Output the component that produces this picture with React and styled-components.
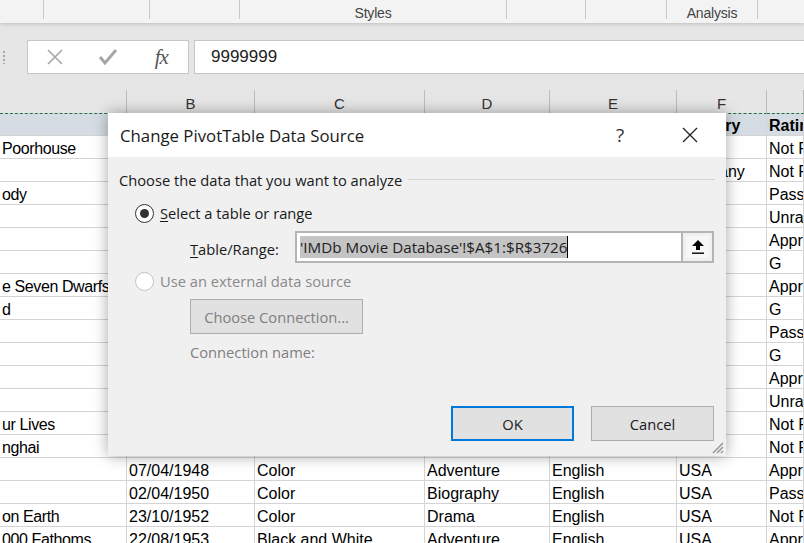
import React from "react"
import styled, { createGlobalStyle } from "styled-components"

const GlobalStyle = createGlobalStyle`
    html, body {
        margin: 0;
        padding: 0;
        width: 804px;
        height: 543px;
        overflow: hidden;
        background: #ffffff;
    }
    * { box-sizing: border-box; }
`

const Page = styled.div`
    position: relative;
    width: 804px;
    height: 543px;
    overflow: hidden;
    font-family: "Liberation Sans", Arial, sans-serif;
    display: flex;
    flex-direction: column;

    & > * { flex-shrink: 0; }
`

const Ribbon = styled.div`
    height: 23px;
    background: #f3f3f3;
    display: flex;
    position: relative;
    z-index: 2;
    box-shadow: 0 1px 4px rgba(0, 0, 0, 0.18);
`

const RibbonGroup = styled.div`
    width: ${p => p.w}px;
    flex: ${p => (p.grow ? 1 : "none")};
    height: 19px;
    border-right: ${p => (p.last ? "none" : "1px solid #c8c8c8")};
    display: flex;
    justify-content: center;
    align-items: center;
    color: #444;
    font-size: 14px;
    padding-top: 7px;
    letter-spacing: -0.2px;
`

const FormulaArea = styled.div`
    height: 67px;
    background: #e6e6e6;
    display: flex;
    align-items: flex-start;
    padding-top: 17px;
`

const Grip = styled.div`
    width: 27px;
    height: 34px;
    display: flex;
    align-items: center;
    padding-left: 3px;
`

const GripDots = styled.div`
    width: 2px;
    height: 13px;
    background: repeating-linear-gradient(to bottom, #a8a8a8 0 2px, transparent 2px 4px);
`

const FormulaButtons = styled.div`
    width: 162px;
    height: 34px;
    background: #fff;
    border: 1px solid #c6c6c6;
    display: flex;
    align-items: center;
`

const FormulaButton = styled.div`
    width: 54px;
    display: flex;
    justify-content: center;
    align-items: center;
    color: #a6a6a6;
`

const FxLabel = styled.span`
    font-family: "Liberation Serif", "Times New Roman", serif;
    font-style: italic;
    font-size: 21px;
    color: #555;
    letter-spacing: -1px;
`

const FormulaInput = styled.div`
    flex: 1;
    margin-left: 5px;
    height: 34px;
    background: #fff;
    border: 1px solid #c6c6c6;
    border-right: none;
    display: flex;
    align-items: center;
    padding-left: 16px;
    font-size: 17px;
    color: #222;
`

const Sheet = styled.div`
    display: grid;
    grid-template-columns: 127px 128px 170px 125px 127px 90px 1fr;
    grid-auto-rows: 23px;
    font-size: 16px;
    color: #000;
`

const ColHead = styled.div`
    background: #e6e6e6;
    border-right: 1px solid #bdbdbd;
    display: flex;
    justify-content: center;
    align-items: center;
    padding-top: 3px;
    font-size: 15px;
    color: #333;
`

const Cell = styled.div`
    border-right: 1px solid #d4d4d4;
    border-bottom: 1px solid #d4d4d4;
    padding: 3px 3px 0 2px;
    display: flex;
    align-items: center;
    white-space: nowrap;
    overflow: hidden;
    letter-spacing: ${p => (p.tight ? "-0.4px" : "0")};
    background: ${p => (p.head ? "#d6dce4" : "#fff")};
    font-weight: ${p => (p.head ? "bold" : "normal")};
    border-top: ${p => (p.head ? "1px dashed #217346" : "none")};
`

const Dialog = styled.div`
    position: absolute;
    left: 108px;
    top: 113px;
    width: 618px;
    height: 343px;
    background: #f0f0f0;
    box-shadow: 0 0 14px rgba(0, 0, 0, 0.35);
    font-family: "Open Sans", "Noto Sans", sans-serif;
    display: flex;
    flex-direction: column;
    z-index: 5;
`

const TitleBar = styled.div`
    height: 44px;
    background: #fff;
    display: flex;
    align-items: center;
    padding-left: 12px;
`

const Title = styled.div`
    flex: 1;
    font-size: 16.8px;
    color: #1a1a1a;
`

const TitleIcon = styled.div`
    width: ${p => p.w}px;
    height: 44px;
    display: flex;
    justify-content: center;
    align-items: center;
    font-size: 19px;
    color: #333;
`

const Body = styled.div`
    flex: 1;
    padding: 12px 11px 0 11px;
    display: flex;
    flex-direction: column;
    position: relative;
`

const GroupLegend = styled.div`
    display: flex;
    align-items: center;
    gap: 6px;
    font-size: 14.7px;
    color: #1a1a1a;
    height: 22px;

    &::after {
        content: "";
        flex: 1;
        height: 1px;
        background: #d5d5d5;
        margin-top: -2px;
    }
`

const OptionRow = styled.label`
    display: flex;
    align-items: center;
    gap: 6px;
    height: 22px;
    margin-left: 16px;
    margin-top: ${p => p.mt}px;
    font-size: 14.7px;
    color: ${p => (p.disabled ? "#8a8a8a" : "#1a1a1a")};
`

const Radio = styled.span`
    width: 19px;
    height: 19px;
    border-radius: 50%;
    border: 1px solid ${p => (p.disabled ? "#c4c4c4" : "#333")};
    background: #fff;
    display: flex;
    justify-content: center;
    align-items: center;

    &::after {
        content: "";
        width: 9px;
        height: 9px;
        border-radius: 50%;
        background: ${p => (p.checked ? "#333" : "transparent")};
    }
`

const Mnemonic = styled.span`
    text-decoration: underline;
    text-underline-offset: 2px;
`

const RangeRow = styled.div`
    display: flex;
    align-items: center;
    margin-left: 71px;
    margin-top: 7px;
    font-size: 14.7px;
    color: #1a1a1a;
`

const RangeLabel = styled.span`
    width: 105px;
    padding-top: 3px;
`

const RangeBox = styled.div`
    flex: 1;
    height: 32px;
    margin-right: 1px;
    background: #fff;
    border: 2px solid #b4b4b4;
    display: flex;
    align-items: center;
`

const RangeText = styled.div`
    flex: 1;
    padding-left: 3px;
    display: flex;
    align-items: center;
    font-size: 15.2px;
    color: #222;
`

const Selected = styled.span`
    background: #c4c4c4;
    padding: 1px 0;
    border-right: 1px solid #000;
`

const CollapseButton = styled.div`
    width: 31px;
    height: 28px;
    border-left: 2px solid #b4b4b4;
    background: #f0f0f0;
    display: flex;
    justify-content: center;
    align-items: center;
    padding: 3px;
`

const CollapseInner = styled.div`
    width: 100%;
    height: 100%;
    background: #f7f7f7;
    display: flex;
    justify-content: center;
    align-items: center;
`

const Button = styled.div`
    width: ${p => p.w}px;
    height: 35px;
    background: #e1e1e1;
    border: ${p => (p.primary ? "2px solid #0078d7" : "1px solid #adadad")};
    display: flex;
    justify-content: center;
    align-items: center;
    font-size: 14.7px;
    color: ${p => (p.disabled ? "#7f7f7f" : "#1a1a1a")};
`

const ConnectionBlock = styled.div`
    margin-left: 71px;
    margin-top: 7px;
    display: flex;
    flex-direction: column;
    gap: 8px;
`

const MutedText = styled.div`
    font-size: 14.7px;
    color: #7f7f7f;
`

const Footer = styled.div`
    display: flex;
    justify-content: flex-end;
    gap: 17px;
    margin-top: auto;
    margin-bottom: 15px;
    padding-right: 1px;
`

const ResizeGrip = styled.svg`
    position: absolute;
    right: 2px;
    bottom: 2px;
`

const ribbonGroups = [
    { w: 44 }, { w: 106 }, { w: 90 }, { w: 267, label: "Styles" },
    { w: 79 }, { w: 81 }, { w: 91, label: "Analysis" }, { w: 46, grow: true, last: true },
]

const columns = ["", "B", "C", "D", "E", "F", ""]

const rows = [
    { head: true, cells: ["", "Release Date", "Color/B&W", "Genre", "Language", "Country", "Rating"] },
    { cells: ["Poorhouse", "01/01/1916", "Black and White", "Crime", "English", "USA", "Not Rated"] },
    { cells: ["", "01/01/1920", "Black and White", "Drama", "German", "Germany", "Not Rated"] },
    { cells: ["ody", "01/01/1929", "Black and White", "Musical", "English", "USA", "Passed"] },
    { cells: ["", "01/01/1933", "Black and White", "Comedy", "English", "USA", "Unrated"] },
    { cells: ["", "01/01/1935", "Black and White", "Comedy", "English", "USA", "Approved"] },
    { cells: ["", "01/01/1936", "Black and White", "Comedy", "English", "USA", "G"] },
    { cells: ["e Seven Dwarfs", "21/12/1937", "Color", "Animation", "English", "USA", "Approved"] },
    { cells: ["d", "25/08/1939", "Color", "Adventure", "English", "USA", "G"] },
    { cells: ["", "07/02/1940", "Color", "Animation", "English", "USA", "Passed"] },
    { cells: ["", "13/11/1940", "Color", "Animation", "English", "USA", "G"] },
    { cells: ["", "23/10/1941", "Color", "Animation", "English", "USA", "Approved"] },
    { cells: ["", "01/01/1946", "Black and White", "Drama", "English", "USA", "Unrated"] },
    { cells: ["ur Lives", "21/11/1946", "Black and White", "Drama", "English", "USA", "Not Rated"] },
    { cells: ["nghai", "24/12/1947", "Black and White", "Drama", "English", "USA", "Not Rated"] },
    { cells: ["", "07/04/1948", "Color", "Adventure", "English", "USA", "Approved"] },
    { cells: ["", "02/04/1950", "Color", "Biography", "English", "USA", "Passed"] },
    { cells: ["on Earth", "23/10/1952", "Color", "Drama", "English", "USA", "Not Rated"] },
    { cells: ["000 Fathoms", "22/08/1953", "Black and White", "Adventure", "English", "USA", "Approved"] },
]

const CrossIcon = () => (
    <svg width="18" height="18" viewBox="0 0 18 18">
        <path d="M2 2 L16 16 M16 2 L2 16" stroke="#a6a6a6" strokeWidth="1.6" fill="none" />
    </svg>
)

const CheckIcon = () => (
    <svg width="20" height="18" viewBox="0 0 20 18">
        <path d="M2 9 L7 15 L18 2" stroke="#a6a6a6" strokeWidth="3" fill="none" />
    </svg>
)

const CloseIcon = () => (
    <svg width="16" height="16" viewBox="0 0 16 16">
        <path d="M1 1 L15 15 M15 1 L1 15" stroke="#222" strokeWidth="1.3" fill="none" />
    </svg>
)

const UploadIcon = () => (
    <svg width="14" height="16" viewBox="0 0 14 16">
        <path d="M7 1 L13 7 L9 7 L9 11 L5 11 L5 7 L1 7 Z" fill="#000" />
        <rect x="1" y="13.5" width="12" height="1.4" fill="#000" />
    </svg>
)

const App = () => {
    return (
        <>
            <GlobalStyle />
            <Page>
                <Ribbon>
                    {ribbonGroups.map((g, i) => (
                        <RibbonGroup key={i} w={g.w} grow={g.grow} last={g.last}>{g.label}</RibbonGroup>
                    ))}
                </Ribbon>
                <FormulaArea>
                    <Grip><GripDots /></Grip>
                    <FormulaButtons>
                        <FormulaButton><CrossIcon /></FormulaButton>
                        <FormulaButton><CheckIcon /></FormulaButton>
                        <FormulaButton><FxLabel>fx</FxLabel></FormulaButton>
                    </FormulaButtons>
                    <FormulaInput>9999999</FormulaInput>
                </FormulaArea>
                <Sheet>
                    {columns.map((c, i) => <ColHead key={i}>{c}</ColHead>)}
                    {rows.map((r, ri) =>
                        r.cells.map((text, ci) => (
                            <Cell key={ri + "-" + ci} head={r.head} tight={ci === 0}>{text}</Cell>
                        ))
                    )}
                </Sheet>

                <Dialog>
                    <TitleBar>
                        <Title>Change PivotTable Data Source</Title>
                        <TitleIcon w={68}>?</TitleIcon>
                        <TitleIcon w={72}><CloseIcon /></TitleIcon>
                    </TitleBar>
                    <Body>
                        <GroupLegend>Choose the data that you want to analyze</GroupLegend>
                        <OptionRow mt={11}>
                            <Radio checked />
                            <span><Mnemonic>S</Mnemonic>elect a table or range</span>
                        </OptionRow>
                        <RangeRow>
                            <RangeLabel><Mnemonic>T</Mnemonic>able/Range:</RangeLabel>
                            <RangeBox>
                                <RangeText><Selected>'IMDb Movie Database'!$A$1:$R$3726</Selected></RangeText>
                                <CollapseButton><CollapseInner><UploadIcon /></CollapseInner></CollapseButton>
                            </RangeBox>
                        </RangeRow>
                        <OptionRow mt={7} disabled>
                            <Radio disabled />
                            <span>Use an external data source</span>
                        </OptionRow>
                        <ConnectionBlock>
                            <Button w={173} disabled>Choose Connection...</Button>
                            <MutedText>Connection name:</MutedText>
                        </ConnectionBlock>
                        <Footer>
                            <Button w={123} primary>OK</Button>
                            <Button w={123}>Cancel</Button>
                        </Footer>
                        <ResizeGrip width="12" height="12" viewBox="0 0 12 12">
                            <path d="M11 1 L1 11 M11 5 L5 11 M11 9 L9 11" stroke="#9a9a9a" strokeWidth="1.6" />
                        </ResizeGrip>
                    </Body>
                </Dialog>
            </Page>
        </>
    )
}

export default App
